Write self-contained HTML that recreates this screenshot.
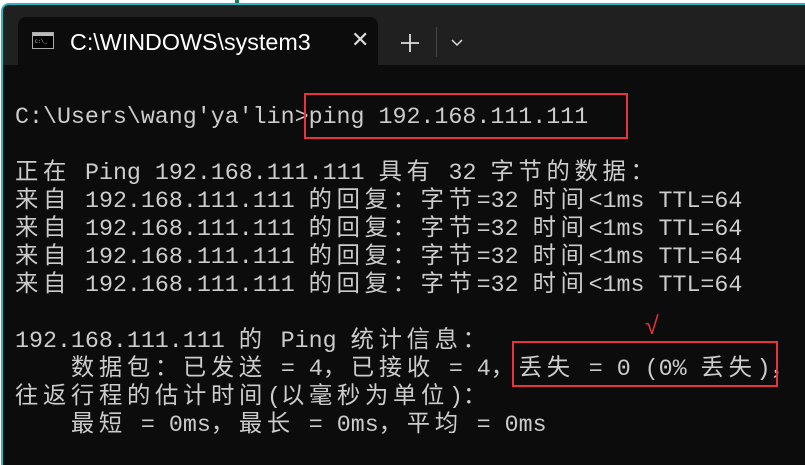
<!DOCTYPE html>
<html><head><meta charset="utf-8"><style>
html,body{margin:0;padding:0;width:805px;height:453px;overflow:hidden;background:#fff}
#win{position:absolute;left:1px;top:3px;width:810px;height:460px;background:#0c0c0c;border-left:2px solid #2bb5c4;border-top:2px solid #2bb5c4;border-top-left-radius:8px;overflow:hidden}
#bar{position:absolute;left:0;top:0;width:100%;height:60px;background:#202020}
#tab{position:absolute;left:15px;top:12px;width:360px;height:50px;background:#0c0c0c;border-radius:8px 8px 0 0}
#tabt{position:absolute;left:52px;top:12px;color:#fff;font:23.3px "Liberation Sans",sans-serif;}
.x{position:absolute;left:333px;top:10px;color:#ddd;font:22px "Liberation Sans",sans-serif}
.term{position:absolute;left:15px;color:#cccccc;font:23.3px/28px "Liberation Mono","Noto Sans CJK SC",monospace;white-space:pre}
.c{display:inline-block;width:28px;text-align:left}
.box{position:absolute;border:2.5px solid #e8333a}
</style></head><body>
<div style="position:absolute;left:235px;top:0;width:4px;height:4px;background:#1a7a5a"></div>
<div id="win">
<div id="bar"></div>
<div id="tab">
<svg style="position:absolute;left:14px;top:15px" width="22" height="17"><rect x="0.5" y="0.5" width="21" height="16" fill="#000" stroke="#aaa"/><rect x="1" y="1" width="20" height="3" fill="#bbb"/><text x="3" y="11" fill="#ccc" font-size="5" font-family="Liberation Mono">C:\_</text></svg>
<div id="tabt">C:\WINDOWS\system3</div>
<div class="x">✕</div>
</div>
<svg style="position:absolute;left:397px;top:28px" width="20" height="20"><path d="M10 1V19M1 10H19" stroke="#ddd" stroke-width="1.8"/></svg>
<div style="position:absolute;left:433px;top:22px;width:1px;height:30px;background:#444"></div>
<svg style="position:absolute;left:448px;top:34px" width="12" height="8"><path d="M1 1L6 6L11 1" stroke="#ddd" stroke-width="1.5" fill="none"/></svg>
</div>
<div class="term" id="t" style="top:103px">C:\Users\wang'ya'lin>ping 192.168.111.111

正在 Ping 192.168.111.111 具有 32 字节的数据：
来自 192.168.111.111 的回复：字节=32 时间&lt;1ms TTL=64
来自 192.168.111.111 的回复：字节=32 时间&lt;1ms TTL=64
来自 192.168.111.111 的回复：字节=32 时间&lt;1ms TTL=64
来自 192.168.111.111 的回复：字节=32 时间&lt;1ms TTL=64

192.168.111.111 的 Ping 统计信息：
    数据包：已发送 = 4，已接收 = 4，丢失 = 0 (0% 丢失)，
往返行程的估计时间(以毫秒为单位)：
    最短 = 0ms，最长 = 0ms，平均 = 0ms</div>
<div class="box" style="left:304px;top:93px;width:320px;height:42px"></div>
<div class="box" style="left:512px;top:341px;width:262px;height:42px"></div>
<div style="position:absolute;left:645px;top:312px;color:#e8333a;font:25px 'Liberation Sans',sans-serif">√</div>
<script>
var t=document.getElementById('t');
t.innerHTML=t.innerHTML.replace(/([^\x00-\x7f])/g,'<span class="c">$1</span>');
</script>
</body></html>
